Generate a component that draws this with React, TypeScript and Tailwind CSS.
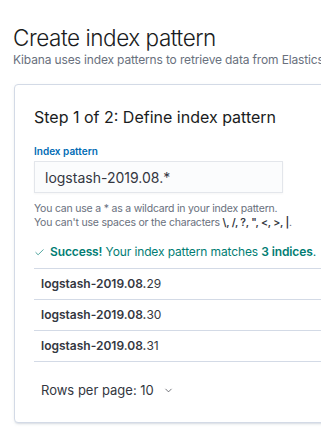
import { ChevronDown, Check } from "lucide-react";

const rows = ["29", "30", "31"];

export default function App() {
  return (
    <div
      className="h-[438px] w-[321px] overflow-hidden bg-white text-[#343741]"
      style={{ fontFamily: "Inter, 'Liberation Sans', sans-serif" }}
    >
      {/* Header */}
      <div className="pl-[13px] pt-[25px]">
        <h1 className="whitespace-nowrap text-[22.5px] font-light leading-[26px] tracking-[-0.02em] text-[#1a1c21]">
          Create index pattern
        </h1>
        <p className="mt-[1px] whitespace-nowrap text-[12px] leading-[16px] tracking-[-0.012em] text-[#69707d]">
          Kibana uses index patterns to retrieve data from Elasticsearch indices
        </p>
      </div>

      {/* Card */}
      <div className="ml-[14px] mt-[16px] w-[340px] rounded-[4px] border border-[#d3dae6] bg-white px-[19px] pb-[24px] pt-[22px] shadow-[0_2px_2px_-1px_rgba(152,162,179,0.3),0_1px_5px_-2px_rgba(152,162,179,0.3)]">
        <h2 className="whitespace-nowrap text-[16px] leading-[20px] text-[#1a1c21]">
          Step 1 of 2: Define index pattern
        </h2>

        <div className="mt-[18px]">
          <label className="block text-[10px] font-semibold leading-[12px] text-[#006bb4]">
            Index pattern
          </label>
          <div className="mt-[4px] flex h-[32px] w-[249px] items-center border border-[#e3e6eb] bg-[#fbfcfd] px-[10px] text-[14px] text-[#343741] shadow-[0_1px_2px_rgba(0,0,0,0.04)]">
            logstash-2019.08.*
          </div>
          <div className="mt-[9px] whitespace-nowrap text-[10.5px] leading-[14px] tracking-[-0.02em] text-[#69707d]">
            <div>You can use a * as a wildcard in your index pattern.</div>
            <div>
              You can't use spaces or the characters{" "}
              <span className="font-semibold text-[#343741]">\, /, ?, ", &lt;, &gt;, |</span>.
            </div>
          </div>
        </div>

        <div className="mt-[14px] flex items-center gap-[5px] whitespace-nowrap text-[12px] leading-[16px] tracking-[-0.01em] text-[#017d73]">
          <Check className="h-[11px] w-[11px] shrink-0" strokeWidth={1.5} />
          <span>
            <b className="font-semibold">Success!</b> Your index pattern matches{" "}
            <b className="font-semibold">3 indices</b>.
          </span>
        </div>

        <div className="mt-[8px] border-t border-[#d3dae6]">
          {rows.map((r) => (
            <div
              key={r}
              className="flex h-[31px] items-center border-b border-[#d3dae6] px-[7px] text-[12px] text-[#343741]"
            >
              <span className="font-semibold">logstash-2019.08.</span>
              <span>{r}</span>
            </div>
          ))}
        </div>

        <div className="mt-[20px] flex items-center gap-[9px] px-[7px] text-[13px] leading-[16px] text-[#343741]">
          <span>Rows per page: 10</span>
          <ChevronDown className="h-[11px] w-[11px]" strokeWidth={1.5} />
        </div>
      </div>
    </div>
  );
}
